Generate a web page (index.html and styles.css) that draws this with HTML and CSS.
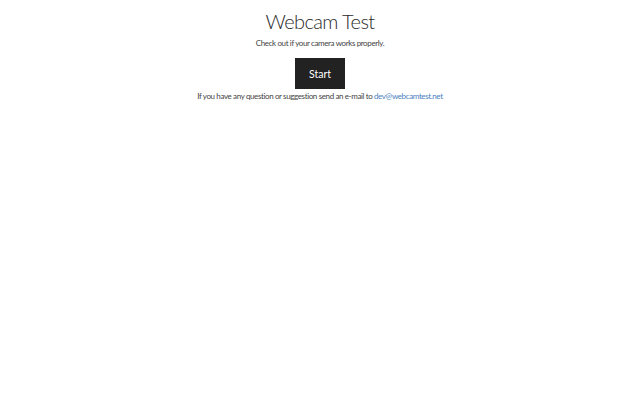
FILE: index.html
```html
<!DOCTYPE html>
<html>
<head>
<meta charset="utf-8">
<link rel="stylesheet" href="styles.css">
</head>
<body>
<main class="page">
  <h1 class="title">Webcam Test</h1>
  <p class="subtitle">Check out if your camera works properly.</p>
  <button class="start">Start</button>
  <p class="contact">If you have any question or suggestion send an e-mail to <a class="mail" href="#">dev@webcamtest.net</a></p>
</main>
</body>
</html>
```
FILE: styles.css
```css
html, body { margin: 0; padding: 0; background: #fff; }
.page {
  display: flex;
  flex-direction: column;
  align-items: center;
  font-family: Lato, "Noto Sans", sans-serif;
  color: #444;
}
.title {
  margin: 9px 0 0;
  font-size: 20px;
  font-weight: 300;
  letter-spacing: -0.6px;
  line-height: 24px;
  color: #2a2a2a;
}
.subtitle {
  margin: 4px 0 0;
  font-size: 8px;
  letter-spacing: -0.38px;
  line-height: 12px;
  color: #444;
}
.start {
  margin-top: 9px;
  width: 50px;
  height: 31px;
  border: none;
  background: #222;
  color: #fff;
  font-family: Lato, "Noto Sans", sans-serif;
  font-size: 10.5px;
  font-weight: 400;
  padding: 0;
}
.contact {
  margin: 1px 0 0;
  font-size: 8px;
  letter-spacing: -0.38px;
  line-height: 12px;
  color: #444;
}
.mail { color: #4a7fc1; text-decoration: none; }
```
